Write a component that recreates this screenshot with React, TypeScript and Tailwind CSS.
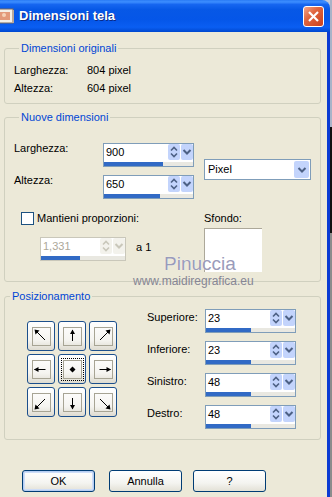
import React from "react";

function UpDown({ disabled }: { disabled?: boolean }) {
  const c = disabled ? "#C9C7BA" : "#4D6185";
  return (
    <div
      className={`w-[12px] h-[16px] rounded-[2px] flex items-center justify-center ${
        disabled ? "bg-[#F3F2EC]" : "bg-[#C3D4FC]"
      }`}
    >
      <svg width="12" height="16" viewBox="0 0 12 16">
        <polyline points="3,6.5 6,3.5 9,6.5" fill="none" stroke={c} strokeWidth="1.6" />
        <polyline points="3,9.5 6,12.5 9,9.5" fill="none" stroke={c} strokeWidth="1.6" />
      </svg>
    </div>
  );
}

function DropBtn({ disabled, w = "w-[12px]", h = "h-[16px]" }: { disabled?: boolean; w?: string; h?: string }) {
  const c = disabled ? "#C9C7BA" : "#4D6185";
  return (
    <div
      className={`${w} ${h} ml-[1px] rounded-[2px] flex items-center justify-center ${
        disabled ? "bg-[#F3F2EC]" : "bg-[#C3D4FC]"
      }`}
    >
      <svg width="10" height="10" viewBox="0 0 10 10">
        <polyline points="1.5,3 5,6.5 8.5,3" fill="none" stroke={c} strokeWidth="2" />
      </svg>
    </div>
  );
}

function SpinField({
  value,
  bar,
  width = "w-[91px]",
  disabled,
}: {
  value: string;
  bar: string;
  width?: string;
  disabled?: boolean;
}) {
  return (
    <div
      className={`${width} h-[24px] shrink-0 border bg-white flex flex-col ${
        disabled ? "border-[#C9C7BA]" : "border-[#7F9DB9]"
      }`}
    >
      <div className="flex h-[18px]">
        <span
          className={`flex-1 pl-[2px] pt-[1px] leading-[15px] ${
            disabled ? "text-[#ACA899]" : "text-black"
          }`}
        >
          {value}
        </span>
        <UpDown disabled={disabled} />
        <DropBtn disabled={disabled} />
      </div>
      <div className="h-[4px] bg-[#E9E8E1] flex">
        <div className={`h-full bg-[#316AC5] ${bar}`} />
      </div>
    </div>
  );
}

function Arrow({ kind }: { kind: string }) {
  const line: Record<string, [number, number, number, number]> = {
    tl: [2, 2, 12, 12],
    t: [8.5, 2, 8.5, 13],
    tr: [15, 2, 5, 12],
    l: [1.5, 8.5, 12.5, 8.5],
    r: [4.5, 8.5, 15.5, 8.5],
    bl: [2, 15, 12, 5],
    b: [8.5, 4, 8.5, 15],
    br: [15, 15, 5, 5],
  };
  const head: Record<string, string> = {
    tl: "1.5,1.5 6.5,2.5 2.5,6.5",
    t: "8.5,1.5 6,6 11,6",
    tr: "15.5,1.5 10.5,2.5 14.5,6.5",
    l: "1,8.5 5.5,6 5.5,11",
    r: "16,8.5 11.5,6 11.5,11",
    bl: "1.5,15.5 2.5,10.5 6.5,14.5",
    b: "8.5,15.5 6,11 11,11",
    br: "15.5,15.5 14.5,10.5 10.5,14.5",
  };
  return (
    <svg width="17" height="17" viewBox="0 0 17 17">
      {kind === "c" ? (
        <polygon points="8.5,5.5 11.5,8.5 8.5,11.5 5.5,8.5" fill="#000" />
      ) : (
        <>
          <line
            x1={line[kind][0]}
            y1={line[kind][1]}
            x2={line[kind][2]}
            y2={line[kind][3]}
            stroke="#000"
            strokeWidth="1"
          />
          <polygon points={head[kind]} fill="#000" />
        </>
      )}
    </svg>
  );
}

function PosButton({ kind }: { kind: string }) {
  const inner = (
    <div className="w-[19px] h-[19px] border border-[#A7A494] flex items-center justify-center">
      <Arrow kind={kind} />
    </div>
  );
  return (
    <div className="w-[28px] h-[30px] rounded-[3px] border border-[#1C4F8C] bg-[linear-gradient(180deg,#FFFFFF_0%,#F5F4F0_65%,#DEDBD0_100%)] flex items-center justify-center">
      {kind === "c" ? (
        <div className="p-[1px] border border-dotted border-black">{inner}</div>
      ) : (
        inner
      )}
    </div>
  );
}

function XpButton({ label, isDefault }: { label: string; isDefault?: boolean }) {
  return (
    <button
      className={`w-[73px] h-[22px] rounded-[3px] border border-[#003C74] bg-[linear-gradient(180deg,#FFFFFF_0%,#F4F4F0_60%,#E3E1D6_100%)] flex items-center justify-center leading-none ${
        isDefault ? "shadow-[inset_0_0_0_1px_#B5CDF2,inset_0_0_0_2px_#CEDDF7]" : ""
      }`}
    >
      {label}
    </button>
  );
}

export default function App() {
  const posRows = [
    { label: "Superiore:", value: "23" },
    { label: "Inferiore:", value: "23" },
    { label: "Sinistro:", value: "48" },
    { label: "Destro:", value: "48" },
  ];

  return (
    <div className="w-[332px] h-[497px] flex overflow-hidden bg-[#C4CAD8] font-['Liberation_Sans',Arial,sans-serif] text-[11px] text-black">
      <div className="w-[330px] flex flex-col">
        {/* title bar */}
        <div className="h-[32px] shrink-0 rounded-tr-[8px] bg-[linear-gradient(180deg,#2A7BF5_0%,#3D8EFF_6%,#1666F0_14%,#0758E6_30%,#0556E8_60%,#0A5EF2_85%,#0048CF_100%)] flex items-center">
          <svg width="15" height="16" viewBox="0 0 15 16" className="shrink-0">
            <rect x="-2" y="1" width="15" height="14" fill="#F4EFE6" stroke="#7A6A5C" />
            <rect x="0" y="4" width="10" height="8" fill="#E39A7A" />
            <circle cx="4" cy="7" r="2" fill="#F6D3B8" />
            <rect x="12" y="2" width="2" height="13" fill="#B9A89A" />
          </svg>
          <span className="ml-[4px] font-bold text-[13px] text-white [text-shadow:1px_1px_0_#0A2A86] font-['Liberation_Sans',Arial,sans-serif]">
            Dimensioni tela
          </span>
          <div className="ml-auto mr-[6px] w-[21px] h-[21px] rounded-[3px] border border-white bg-[linear-gradient(135deg,#F2A58A_0%,#E0653F_40%,#C9401C_100%)] flex items-center justify-center">
            <svg width="13" height="13" viewBox="0 0 13 13">
              <line x1="2" y1="2" x2="11" y2="11" stroke="#fff" strokeWidth="2.2" />
              <line x1="11" y1="2" x2="2" y2="11" stroke="#fff" strokeWidth="2.2" />
            </svg>
          </div>
        </div>

        {/* body */}
        <div className="relative flex-1 bg-[#ECE9D8] border-r-[3px] border-[#0B3BD3] pl-[4px] pr-[6px]">
          <fieldset className="mt-[10px] border border-[#D0D0BF] rounded-[3px] pl-[9px] pt-[6px] pb-[6px]">
            <legend className="ml-[5px] px-[2px] leading-[13px] text-[#0046D5]">Dimensioni originali</legend>
            <div className="flex h-[18px] items-center">
              <span className="w-[73px]">Larghezza:</span>
              <span>804 pixel</span>
            </div>
            <div className="flex h-[18px] items-center">
              <span className="w-[73px]">Altezza:</span>
              <span>604 pixel</span>
            </div>
          </fieldset>

          <fieldset className="mt-[7px] border border-[#D0D0BF] rounded-[3px] pl-[9px] pt-[19px] pb-[9px]">
            <legend className="ml-[5px] px-[2px] leading-[13px] text-[#0046D5]">Nuove dimensioni</legend>
            <div className="flex">
              <div className="flex flex-col">
                <div className="flex items-start">
                  <span className="w-[89px] leading-[13px] -mt-[1px]">Larghezza:</span>
                  <SpinField value="900" bar="w-[59px]" />
                </div>
                <div className="flex items-start mt-[8px]">
                  <span className="w-[89px] leading-[13px] -mt-[1px]">Altezza:</span>
                  <SpinField value="650" bar="w-[56px]" />
                </div>
              </div>
              <div className="ml-[10px] mt-[16px] w-[107px] h-[21px] border border-[#7F9DB9] bg-white flex items-center pr-[1px]">
                <span className="flex-1 pl-[3px] leading-none">Pixel</span>
                <DropBtn w="w-[15px]" h="h-[17px]" />
              </div>
            </div>

            <div className="flex mt-[13px]">
              <div className="w-[190px] flex flex-col">
                <div className="flex items-center h-[13px] ml-[7px]">
                  <div className="w-[13px] h-[13px] border border-[#1C5180] bg-white" />
                  <span className="ml-[3px] leading-[13px]">Mantieni proporzioni:</span>
                </div>
                <div className="flex items-center mt-[12px] ml-[26px]">
                  <SpinField value="1,331" bar="w-[39px]" width="w-[86px]" disabled />
                  <span className="ml-[10px] -mt-[3px]">a 1</span>
                </div>
              </div>
              <div className="flex flex-col">
                <span className="leading-[13px]">Sfondo:</span>
                <div className="mt-[3px] w-[58px] h-[44px] bg-white border-t border-l border-[#ACA899]" />
              </div>
            </div>
          </fieldset>

          <fieldset className="mt-[8px] border border-[#D0D0BF] rounded-[3px] pt-[6px] pb-[10px]">
            <legend className="ml-[5px] px-[2px] leading-[13px] text-[#0046D5]">Posizionamento</legend>
            <div className="flex items-center">
              <div className="ml-[22px] grid grid-cols-3 gap-[3px]">
                {["tl", "t", "tr", "l", "c", "r", "bl", "b", "br"].map((k) => (
                  <PosButton key={k} kind={k} />
                ))}
              </div>
              <div className="ml-[30px] flex flex-col gap-[8px]">
                {posRows.map((r) => (
                  <div key={r.label} className="flex items-start">
                    <span className="w-[58px] leading-[13px] mt-[2px]">{r.label}</span>
                    <SpinField value={r.value} bar="w-[45px]" />
                  </div>
                ))}
              </div>
            </div>
          </fieldset>

          <div className="flex mt-[30px] ml-[18px]">
            <XpButton label="OK" isDefault />
            <div className="ml-[14px]">
              <XpButton label="Annulla" />
            </div>
            <div className="ml-[11px]">
              <XpButton label="?" />
            </div>
          </div>

          {/* watermark */}
          <span className="absolute left-[164px] top-[222px] text-[19px] leading-none text-[#9A9BBA] [text-shadow:0_0_1px_#ffffff]">
            Pinuccia
          </span>
          <span className="absolute left-[133px] top-[243px] text-[12px] leading-none text-[#858594]">
            www.maidiregrafica.eu
          </span>
        </div>
      </div>
      <div className="w-[2px] flex flex-col">
        <div className="h-[127px] bg-[#A9B3C8]" />
        <div className="h-[106px] bg-[#101010]" />
        <div className="flex-1 bg-[#8C8C8C]" />
      </div>
    </div>
  );
}
